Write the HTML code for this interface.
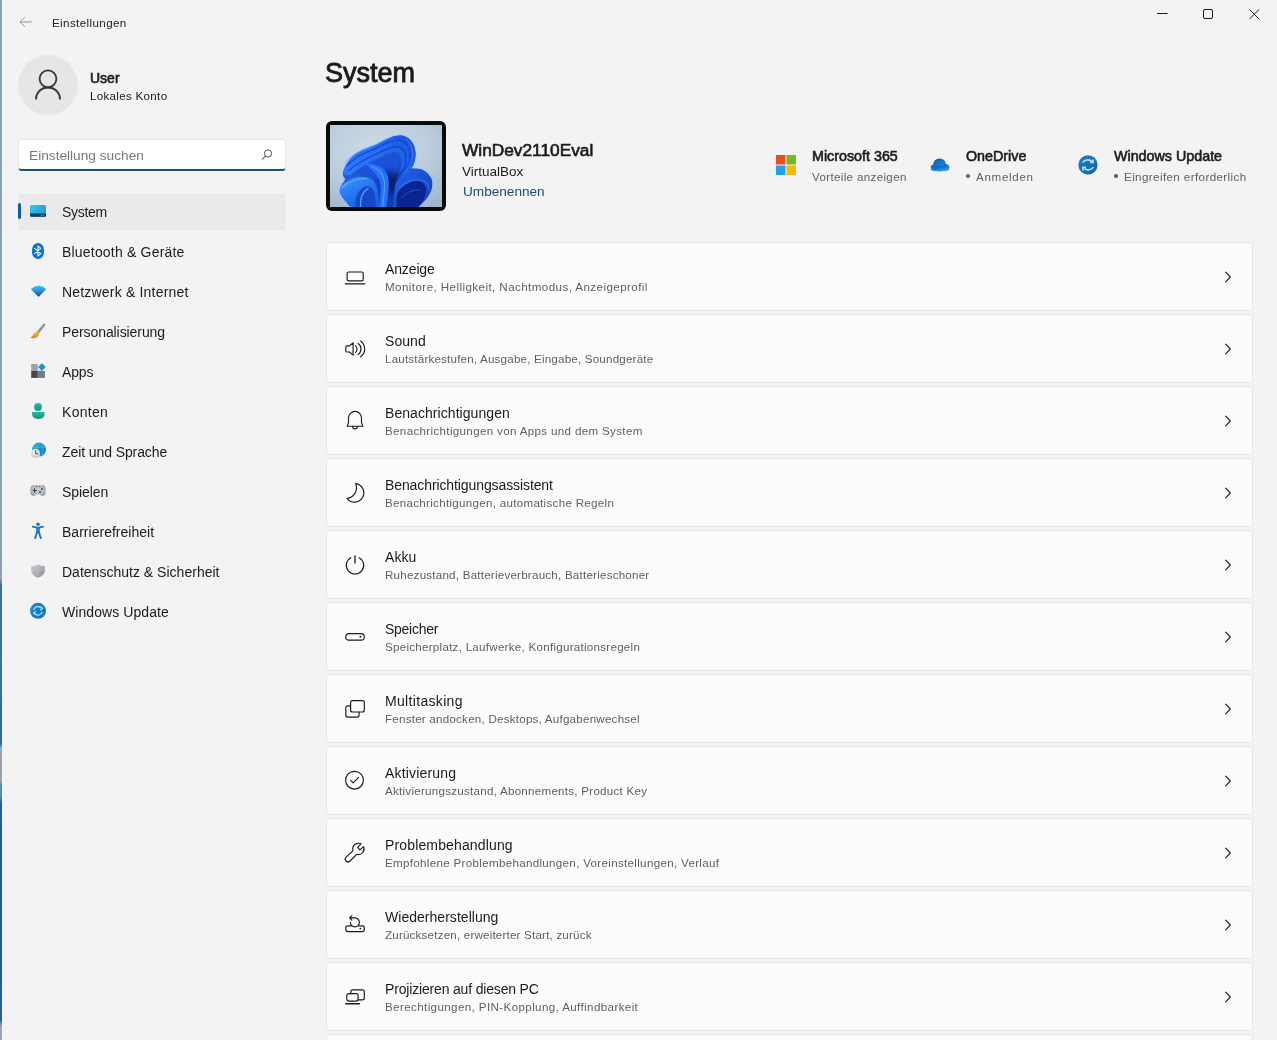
<!DOCTYPE html>
<html><head><meta charset="utf-8">
<style>
*{margin:0;padding:0;box-sizing:border-box}
html,body{width:1277px;height:1040px;overflow:hidden}
body{background:#f3f3f3;font-family:"Liberation Sans",sans-serif;color:#1b1b1b;position:relative}
.a{position:absolute;white-space:nowrap;will-change:transform}
#edge{position:absolute;left:0;top:0;width:2px;height:1040px;background:linear-gradient(#8ba1b0 0,#8e9fab 570px,#9a9cb0 578px,#3a6cae 586px,#3a6cae 645px,#2c7ab0 655px,#2a72ac 700px,#2a6aa8 744px,#80b0d8 748px,#9aa0a8 754px,#9aa0a8 781px,#4a92b2 786px,#4a92b2 796px,#1c5ea8 804px,#1a5ea8 975px,#2a5ea8 1020px,#9aa4b0 1026px)}
#edge2{position:absolute;left:2px;top:0;width:1px;height:1040px;background:#f4f8fb}
.nav{position:absolute;left:18px;width:267px;height:36px;will-change:transform}
.nav .t{position:absolute;left:44px;top:0px;line-height:36px;font-size:14px;color:#1b1b1b}
.nav .ic{position:absolute;left:12px;top:10px;width:16px;height:16px}
.card{will-change:transform;position:absolute;left:326px;width:927px;height:69px;background:#fbfbfb;border:1px solid #e5e5e5;border-radius:3px}
.card .ti{position:absolute;left:58px;top:18px;font-size:14px;color:#1b1b1b;line-height:17px}
.card .su{position:absolute;left:58px;top:36px;font-size:11.6px;color:#5f5f5f;line-height:15px}
.card .ic{position:absolute;left:9px;top:15px;width:40px;height:40px}
.card .ch{position:absolute;left:897px;top:28px;width:8px;height:12px}
</style></head><body>
<div id="edge"></div><div id="edge2"></div>
<!-- title bar -->
<svg class="a" style="left:18px;top:15px" width="14" height="14" viewBox="0 0 14 14"><path d="M2 7H14M6.9 2.1L2 7L6.9 11.9" fill="none" stroke="#9c9c9c" stroke-width="1"/></svg>
<div class="a" style="left:52px;top:15.4px;font-size:11.6px;line-height:15px;letter-spacing:0.39px">Einstellungen</div>
<svg class="a" style="left:1152px;top:8px" width="112" height="16" viewBox="0 0 112 16">
<path d="M5 5.5H15.5" stroke="#1b1b1b" stroke-width="1" fill="none"/>
<rect x="51.5" y="1.5" width="9" height="9" rx="1.5" stroke="#1b1b1b" stroke-width="1" fill="none"/>
<path d="M97.5 1.5L107 11M107 1.5L97.5 11" stroke="#1b1b1b" stroke-width="1" fill="none"/>
</svg>
<!-- user -->
<div class="a" style="left:18px;top:55px;width:60px;height:60px;border-radius:50%;background:#e6e6e6"></div>
<svg class="a" style="left:33px;top:68px" width="30" height="34" viewBox="0 0 30 34"><circle cx="15" cy="10.8" r="8.4" fill="none" stroke="#3a3a3a" stroke-width="1.9"/><path d="M3 31.5C3 24 8.5 19.5 15 19.5S27 24 27 31.5" fill="none" stroke="#3a3a3a" stroke-width="2"/></svg>
<div class="a" style="left:90px;top:70px;font-size:14px;line-height:16px;-webkit-text-stroke:0.6px #1b1b1b">User</div>
<div class="a" style="left:90px;top:88.3px;font-size:11.6px;line-height:15px;letter-spacing:0.3px">Lokales Konto</div>
<!-- search -->
<div class="a" style="left:18px;top:139px;width:268px;height:32px;background:#fff;border:1px solid #e5e5e5;border-bottom:2px solid #1d5278;border-radius:4px"></div>
<div class="a" style="left:29px;top:148px;font-size:13.7px;line-height:16px;color:#787878">Einstellung suchen</div>
<svg class="a" style="left:259px;top:147px" width="16" height="16" viewBox="0 0 16 16"><circle cx="9" cy="6.5" r="3.6" fill="none" stroke="#4a4a4a" stroke-width="1"/><path d="M6.5 9L3.3 12.5" stroke="#4a4a4a" stroke-width="1.1"/></svg>

<!-- nav -->
<div class="nav" style="top:194px;width:268px;background:#eaeaea;border-radius:4px"><div style="position:absolute;left:0;top:9px;width:3px;height:16px;background:#0f5ba6;border-radius:2px"></div></div>
<!-- navicons -->
<svg class="a" style="left:24px;top:195px" width="26" height="430" viewBox="24 195 26 430">
<defs>
<linearGradient id="sysg" x1="0" y1="0" x2="1" y2="0.4"><stop offset="0" stop-color="#36c6dc"/><stop offset="1" stop-color="#1ea0e4"/></linearGradient>
<linearGradient id="wifig" x1="0" y1="0" x2="0" y2="1"><stop offset="0" stop-color="#38c0f2"/><stop offset="0.45" stop-color="#2a96dc"/><stop offset="1" stop-color="#0a3e8e"/></linearGradient>
<linearGradient id="handg" x1="0" y1="0" x2="1" y2="1"><stop offset="0" stop-color="#6a7278"/><stop offset="1" stop-color="#a8b0b6"/></linearGradient>
<linearGradient id="tipg" x1="0" y1="0" x2="0" y2="1"><stop offset="0" stop-color="#f8c040"/><stop offset="1" stop-color="#e07a28"/></linearGradient>
<linearGradient id="kontg" x1="0" y1="0" x2="0" y2="1"><stop offset="0" stop-color="#22c0a0"/><stop offset="1" stop-color="#11907a"/></linearGradient>
<linearGradient id="globg" x1="0" y1="0" x2="1" y2="1"><stop offset="0" stop-color="#28b4d8"/><stop offset="1" stop-color="#1070c0"/></linearGradient>
<radialGradient id="clockg" cx="0.4" cy="0.35" r="0.7"><stop offset="0" stop-color="#f4f4f4"/><stop offset="1" stop-color="#c4c4c4"/></radialGradient>
<radialGradient id="padg" cx="0.5" cy="0.45" r="0.6"><stop offset="0" stop-color="#c6d0da"/><stop offset="0.75" stop-color="#b0b8c2"/><stop offset="1" stop-color="#80868e"/></radialGradient>
<linearGradient id="shg" x1="0" y1="0" x2="1" y2="1"><stop offset="0" stop-color="#cfd3d8"/><stop offset="1" stop-color="#8a8e94"/></linearGradient>
<linearGradient id="wug" x1="0" y1="0" x2="1" y2="1"><stop offset="0" stop-color="#1a8cd8"/><stop offset="1" stop-color="#1370b8"/></linearGradient>
</defs>
<!-- system -->
<rect x="30" y="205" width="16" height="11.8" rx="1.6" fill="url(#sysg)"/>
<path d="M30 213.6H46V214.6A1.6 1.6 0 0 1 44.4 216.8H31.6A1.6 1.6 0 0 1 30 215.2Z" fill="#0b3b5e"/>
<circle cx="41.6" cy="215.2" r="0.55" fill="#9fd6ee"/><circle cx="43.6" cy="215.2" r="0.55" fill="#9fd6ee"/>
<!-- bluetooth -->
<rect x="32" y="243" width="12" height="16" rx="6" ry="7" fill="#0d6fd4"/>
<path d="M34.6 248.4L40.8 253.6L37.9 256V246L40.8 248.4L34.6 253.6" fill="none" stroke="#dff2ff" stroke-width="1.15" stroke-linejoin="round" stroke-linecap="round"/>
<!-- wifi -->
<path d="M38.6 296.6L31.2 289.2Q38.6 282.6 46 289.2Z" fill="url(#wifig)" stroke="url(#wifig)" stroke-width="0.6" stroke-linejoin="round"/>
<!-- brush -->
<path d="M44.6 323.6Q45.8 324.6 45 325.6L39.2 333.2L37 331.4L43.4 324Q44 323.2 44.6 323.6Z" fill="url(#handg)"/>
<path d="M37 331.4L39.2 333.2Q39 336.4 35.6 337.8Q32.8 338.8 30.4 338Q32.4 336.6 33.6 334.2Q34.8 331.6 37 331.4Z" fill="url(#tipg)"/>
<!-- apps -->
<rect x="31.2" y="364" width="6.6" height="6.8" fill="#9ca3aa"/>
<rect x="31.2" y="370.8" width="6.6" height="7.1" fill="#43474b"/>
<rect x="37.8" y="370.8" width="7.1" height="7.1" fill="#737b83"/>
<path d="M41.9 363.3L45.7 367.1L41.9 370.9L38.1 367.1Z" fill="#1f8cd4"/>
<!-- konten -->
<circle cx="38" cy="406.9" r="3.9" fill="url(#kontg)"/>
<path d="M31.9 412H44.7V413Q44.7 418.9 38.3 418.9Q31.9 418.9 31.9 413Z" fill="url(#kontg)"/>
<!-- zeit -->
<circle cx="39" cy="449.6" r="7" fill="url(#globg)"/><ellipse cx="40" cy="449.6" rx="3" ry="6.8" fill="none" stroke="#5ccaf0" stroke-width="0.8" opacity="0.6"/><path d="M32.4 447.2H45.8" stroke="#5ccaf0" stroke-width="0.8" opacity="0.6"/>
<circle cx="35.4" cy="453.6" r="4.8" fill="#f3f3f3" opacity="0.7"/>
<circle cx="35.4" cy="453.6" r="4.5" fill="url(#clockg)"/>
<path d="M35.6 450.4V453.6H38" fill="none" stroke="#3a3a3a" stroke-width="0.9"/>
<!-- spielen -->
<path d="M33.5 485.2H42.5Q45.8 485.2 45.8 490.2Q45.8 495.8 42.5 495.8Q40.5 495.8 39.6 494.6H36.4Q35.5 495.8 33.5 495.8Q30.2 495.8 30.2 490.2Q30.2 485.2 33.5 485.2Z" fill="url(#padg)"/>
<path d="M32.8 490.5H36.8M34.5 488.3V492.6" stroke="#2f3438" stroke-width="1"/>
<circle cx="36.5" cy="486.5" r="0.6" fill="#3a3f44"/><circle cx="39.5" cy="486.5" r="0.6" fill="#3a3f44"/>
<circle cx="42" cy="489" r="0.95" fill="#3e4850"/><circle cx="40" cy="492" r="0.95" fill="#3e4850"/>
<!-- barriere -->
<circle cx="38" cy="524.3" r="1.75" fill="#1a6fb8"/>
<path d="M32.8 526.6L37 527.6H39L43.1 526.6" fill="none" stroke="#1a72c0" stroke-width="1.9" stroke-linecap="round" stroke-linejoin="round"/>
<path d="M38 527.8V533" stroke="#1a80d6" stroke-width="3.6"/>
<path d="M37 532.5L35.2 538M39 532.5L40.8 538" fill="none" stroke="#1a6fb8" stroke-width="1.9" stroke-linecap="round"/>
<!-- shield -->
<path d="M38 564.3Q41.5 566.6 44.8 566V571Q44.8 575.4 38 577.7Q31.2 575.4 31.2 571V566Q34.5 566.6 38 564.3Z" fill="url(#shg)"/>
<path d="M38 564.8V577.2" stroke="#d8dce0" stroke-width="0.5" opacity="0.6"/>
<!-- windows update -->
<circle cx="38" cy="610.8" r="8" fill="url(#wug)"/>
<path d="M33.6 609.8A4.5 4.5 0 0 1 41.6 608.4M42.4 611.8A4.5 4.5 0 0 1 34.4 613.2" fill="none" stroke="#a8e4ff" stroke-width="1.3"/>
<path d="M40.2 606.8L42.6 608.6L40.2 610.2M35.8 611.4L33.4 613L35.8 614.8" fill="none" stroke="#a8e4ff" stroke-width="1.2" stroke-linejoin="round"/>
</svg>
<div class="nav" style="top:194px"><div class="t" style="letter-spacing:-0.300px">System</div></div>
<div class="nav" style="top:234px"><div class="t" style="letter-spacing:0.194px">Bluetooth &amp; Geräte</div></div>
<div class="nav" style="top:274px"><div class="t" style="letter-spacing:0.189px">Netzwerk &amp; Internet</div></div>
<div class="nav" style="top:314px"><div class="t" style="letter-spacing:-0.080px">Personalisierung</div></div>
<div class="nav" style="top:354px"><div class="t" style="letter-spacing:-0.133px">Apps</div></div>
<div class="nav" style="top:394px"><div class="t" style="letter-spacing:0.300px">Konten</div></div>
<div class="nav" style="top:434px"><div class="t" style="letter-spacing:-0.093px">Zeit und Sprache</div></div>
<div class="nav" style="top:474px"><div class="t" style="letter-spacing:-0.067px">Spielen</div></div>
<div class="nav" style="top:514px"><div class="t" style="letter-spacing:0.020px">Barrierefreiheit</div></div>
<div class="nav" style="top:554px"><div class="t" style="letter-spacing:0.013px">Datenschutz &amp; Sicherheit</div></div>
<div class="nav" style="top:594px"><div class="t" style="letter-spacing:0.077px">Windows Update</div></div>

<!-- header -->
<div class="a sb" style="left:325px;top:57.3px;font-size:27px;line-height:32px;-webkit-text-stroke:0.85px #1b1b1b">System</div>
<div class="a" style="left:326px;top:121px;width:120px;height:90px;background:#0a0a0a;border-radius:6px"></div>
<svg class="a" style="left:330px;top:125px" width="112" height="82" viewBox="0 0 1277 935">
<defs>
<radialGradient id="bg" cx="0.42" cy="0.3" r="0.85"><stop offset="0" stop-color="#cfdbe7"/><stop offset="0.55" stop-color="#bccddd"/><stop offset="1" stop-color="#9fb6cd"/></radialGradient>
<linearGradient id="sil" x1="0" y1="0" x2="1" y2="1"><stop offset="0" stop-color="#2a6ef6"/><stop offset="1" stop-color="#0d2f9e"/></linearGradient>
<linearGradient id="rib" x1="0" y1="0.5" x2="1" y2="0"><stop offset="0" stop-color="#2c78ff"/><stop offset="0.6" stop-color="#2166f2"/><stop offset="1" stop-color="#1a4fd0"/></linearGradient>
<linearGradient id="lp" x1="0" y1="0" x2="0.6" y2="1"><stop offset="0" stop-color="#3a96ff"/><stop offset="1" stop-color="#1a5fe6"/></linearGradient>
<linearGradient id="rl" x1="0" y1="0" x2="1" y2="1"><stop offset="0" stop-color="#2264ee"/><stop offset="1" stop-color="#1040b8"/></linearGradient>
<filter id="gl" x="-20%" y="-20%" width="140%" height="140%"><feGaussianBlur stdDeviation="18"/></filter>
<filter id="sb" x="-20%" y="-20%" width="140%" height="140%"><feGaussianBlur stdDeviation="9"/></filter>
<filter id="bl" x="-50%" y="-50%" width="200%" height="200%"><feGaussianBlur stdDeviation="40"/></filter>
</defs>
<rect width="1277" height="935" fill="url(#bg)"/>
<path id="silp" d="M235 935C170 860 105 790 112 740C118 690 160 650 175 620C150 590 140 560 150 540C165 470 215 390 290 330C380 270 470 250 560 205C660 150 740 110 830 122C920 140 975 230 975 330C975 410 950 460 925 500C1010 480 1100 520 1150 600C1180 660 1170 740 1120 810C1080 870 1030 910 1010 935Z" fill="#7ab8ff" opacity="0.75" filter="url(#gl)"/>
<path d="M235 935C170 860 105 790 112 740C118 690 160 650 175 620C150 590 140 560 150 540C165 470 215 390 290 330C380 270 470 250 560 205C660 150 740 110 830 122C920 140 975 230 975 330C975 410 950 460 925 500C1010 480 1100 520 1150 600C1180 660 1170 740 1120 810C1080 870 1030 910 1010 935Z" fill="url(#sil)"/>
<!-- top ribbon -->
<path d="M150 540C165 470 215 390 290 330C380 270 470 250 560 205C660 150 740 110 830 122C920 140 975 230 975 330C975 410 950 460 925 500C880 560 800 600 720 630C790 560 830 470 810 380C790 300 720 290 640 330C520 390 380 450 230 570C190 580 160 570 150 540Z" fill="url(#rib)"/>
<path d="M190 470C260 390 360 330 470 290C580 250 680 160 800 175C880 190 920 270 915 350C910 430 870 500 800 560" fill="none" stroke="#1446c8" stroke-width="16" opacity="0.85" filter="url(#sb)"/>
<path d="M215 520C300 440 400 390 500 345C600 300 690 235 780 250C850 265 870 330 865 400C860 470 820 540 760 590" fill="none" stroke="#123cb4" stroke-width="14" opacity="0.8" filter="url(#sb)"/>
<path d="M175 420C240 350 330 300 420 270C520 235 600 180 700 140" fill="none" stroke="#5aa8ff" stroke-width="10" opacity="0.8" filter="url(#sb)"/>
<path d="M860 150C930 210 950 300 940 380" fill="none" stroke="#4a90ff" stroke-width="10" opacity="0.7" filter="url(#sb)"/>
<!-- inner hollow -->
<path d="M330 520C420 450 530 400 630 360C710 330 770 350 780 420C790 500 760 560 700 610C620 600 520 590 430 570C380 560 350 545 330 520Z" fill="#1a52dc"/>
<!-- dark center -->
<ellipse cx="700" cy="660" rx="110" ry="130" fill="#081a70" filter="url(#bl)"/>
<!-- middle S stripe -->
<path d="M400 440C500 430 600 470 650 560C690 640 670 760 640 935H560C580 800 590 700 560 620C530 560 470 500 400 440Z" fill="#2a74ff" opacity="0.95"/>
<path d="M470 470C560 500 610 560 620 640C630 720 610 820 600 935" fill="none" stroke="#6ab4ff" stroke-width="12" opacity="0.7" filter="url(#sb)"/>
<!-- right lobe -->
<path d="M760 640C820 560 920 500 1010 500C1100 510 1160 590 1160 680C1160 760 1110 830 1060 880C1035 905 1020 925 1010 935H720C740 860 720 720 760 640Z" fill="url(#rl)"/>
<path d="M780 760C840 680 930 630 1010 640C1080 650 1110 720 1090 790C1070 850 1040 900 1000 935H760C760 860 750 810 780 760Z" fill="#0b2590"/>
<path d="M790 720C850 650 950 610 1040 630C1100 645 1130 690 1130 740" fill="none" stroke="#3a7cff" stroke-width="12" opacity="0.8" filter="url(#sb)"/>
<path d="M820 830C880 760 960 730 1030 745" fill="none" stroke="#2a5ee0" stroke-width="10" opacity="0.8" filter="url(#sb)"/>
<!-- left petal -->
<path d="M112 740C118 690 160 650 250 610C330 580 430 580 490 630C540 690 560 800 560 935H235C170 860 105 790 112 740Z" fill="url(#lp)"/>
<path d="M290 935C280 830 320 730 410 700C470 690 500 740 510 800C520 850 520 900 520 935Z" fill="#1648c8" filter="url(#sb)"/>
<path d="M350 935C340 840 370 760 440 720" fill="none" stroke="#6ab8ff" stroke-width="14" opacity="0.8" filter="url(#sb)"/>
<path d="M130 720C200 650 300 610 420 610" fill="none" stroke="#7cc0ff" stroke-width="12" opacity="0.75" filter="url(#sb)"/>
</svg>
<div class="a" style="left:462px;top:139.8px;font-size:17.3px;line-height:20px;-webkit-text-stroke:0.65px #1b1b1b">WinDev2110Eval</div>
<div class="a" style="left:462px;top:164px;font-size:13.5px;line-height:16px;color:#1b1b1b">VirtualBox</div>
<div class="a" style="left:463px;top:184px;font-size:13.6px;line-height:16px;color:#234a7a">Umbenennen</div>

<!-- right items -->
<svg class="a" style="left:776px;top:155px" width="20" height="20" viewBox="0 0 20 20"><rect x="0" y="0" width="9.5" height="9.5" fill="#e8501f"/><rect x="10.5" y="0" width="9.5" height="9.5" fill="#7cb51f"/><rect x="0" y="10.5" width="9.5" height="9.5" fill="#1fa3ea"/><rect x="10.5" y="10.5" width="9.5" height="9.5" fill="#fbb60a"/></svg>
<div class="a" style="left:812px;top:148px;font-size:14.3px;line-height:16px;-webkit-text-stroke:0.6px #1b1b1b">Microsoft 365</div>
<div class="a" style="left:812px;top:169.2px;font-size:11.6px;line-height:15px;letter-spacing:0.34px;color:#5f5f5f">Vorteile anzeigen</div>
<svg class="a" style="left:929px;top:156px" width="22" height="16" viewBox="0 0 22 16"><defs><linearGradient id="cg" x1="0.2" y1="0" x2="0.8" y2="1"><stop offset="0" stop-color="#0b5cb6"/><stop offset="0.55" stop-color="#1a7fd6"/><stop offset="1" stop-color="#2ba6ee"/></linearGradient></defs><g fill="url(#cg)"><circle cx="10.6" cy="9" r="6.6"/><circle cx="17" cy="11.6" r="3.3"/><circle cx="5" cy="11.7" r="3.3"/><rect x="5" y="10" width="12" height="5"/></g></svg>
<div class="a" style="left:966px;top:148px;font-size:14.3px;line-height:16px;-webkit-text-stroke:0.6px #1b1b1b">OneDrive</div>
<div class="a" style="left:966.3px;top:173.9px;width:3.6px;height:3.6px;border-radius:50%;background:#4a6888"></div><div class="a" style="left:976px;top:169.2px;font-size:11.6px;line-height:15px;letter-spacing:0.69px;color:#5f5f5f">Anmelden</div>
<svg class="a" style="left:1078px;top:155px" width="20" height="20" viewBox="0 0 20 20"><defs><linearGradient id="wuh" x1="0" y1="0" x2="1" y2="1"><stop offset="0" stop-color="#1c7fcc"/><stop offset="1" stop-color="#0f62ae"/></linearGradient></defs><circle cx="10" cy="9.9" r="9.6" fill="url(#wuh)"/><path d="M4.6 7.6A5.6 4.6 0 0 1 13.6 6.2M15.4 12A5.6 4.6 0 0 1 6.4 13.6" fill="none" stroke="#b4e6ff" stroke-width="1.6"/><path d="M15 4.4V7.4H12M5 15.4V12.4H8" fill="none" stroke="#b4e6ff" stroke-width="1.6" stroke-linejoin="miter"/></svg>
<div class="a" style="left:1114px;top:148px;font-size:14.3px;line-height:16px;-webkit-text-stroke:0.6px #1b1b1b">Windows Update</div>
<div class="a" style="left:1113.8px;top:174.3px;width:3.6px;height:3.6px;border-radius:50%;background:#4a6888"></div><div class="a" style="left:1124px;top:169.4px;font-size:11.6px;line-height:15px;letter-spacing:0.4px;color:#5f5f5f">Eingreifen erforderlich</div>

<!-- CARDS -->
<div class="card" style="top:242px"><svg class="ic" width="40" height="40" viewBox="0 0 40 40"><rect x="11.1" y="14" width="16.1" height="8.9" rx="1.6" fill="none" stroke="#1b1b1b" stroke-width="1.15" stroke-linecap="round" stroke-linejoin="round"/><path d="M9.2 25.8H28.8" fill="none" stroke="#1b1b1b" stroke-width="1.2" stroke-linecap="round" stroke-linejoin="round"/></svg><div class="ti" style="letter-spacing:-0.133px">Anzeige</div><div class="su" style="letter-spacing:0.424px">Monitore, Helligkeit, Nachtmodus, Anzeigeprofil</div><svg class="ch" width="8" height="12" viewBox="0 0 8 12"><path d="M1.6 1.2L6.4 6L1.6 10.8" fill="none" stroke="#1b1b1b" stroke-width="1.15" stroke-linecap="round" stroke-linejoin="round"/></svg></div>
<div class="card" style="top:314px"><svg class="ic" width="40" height="40" viewBox="0 0 40 40"><path d="M17.1 12.8L13.5 15.9H10.9Q9.8 15.9 9.8 17V20.9Q9.8 22 10.9 22H13.5L17.1 25.1Z" fill="none" stroke="#1b1b1b" stroke-width="1.15" stroke-linecap="round" stroke-linejoin="round"/><path d="M19.6 15.6A4.8 4.8 0 0 1 19.6 22.4M22.1 13.6A6.5 6.5 0 0 1 22.1 24.4M24.6 11A9.7 9.7 0 0 1 24.6 26.8" fill="none" stroke="#1b1b1b" stroke-width="1.15" stroke-linecap="round" stroke-linejoin="round"/></svg><div class="ti" style="letter-spacing:0.050px">Sound</div><div class="su" style="letter-spacing:0.196px">Lautstärkestufen, Ausgabe, Eingabe, Soundgeräte</div><svg class="ch" width="8" height="12" viewBox="0 0 8 12"><path d="M1.6 1.2L6.4 6L1.6 10.8" fill="none" stroke="#1b1b1b" stroke-width="1.15" stroke-linecap="round" stroke-linejoin="round"/></svg></div>
<div class="card" style="top:386px"><svg class="ic" width="40" height="40" viewBox="0 0 40 40"><path d="M11.2 24.2L12.5 20.6V16A6.5 6.6 0 0 1 25.5 16V20.6L26.9 24.2Z" fill="none" stroke="#1b1b1b" stroke-width="1.15" stroke-linecap="round" stroke-linejoin="round"/><path d="M16.6 24.4A2.45 2.45 0 0 0 21.5 24.4" fill="none" stroke="#1b1b1b" stroke-width="1.15" stroke-linecap="round" stroke-linejoin="round"/></svg><div class="ti" style="letter-spacing:0.059px">Benachrichtigungen</div><div class="su" style="letter-spacing:0.334px">Benachrichtigungen von Apps und dem System</div><svg class="ch" width="8" height="12" viewBox="0 0 8 12"><path d="M1.6 1.2L6.4 6L1.6 10.8" fill="none" stroke="#1b1b1b" stroke-width="1.15" stroke-linecap="round" stroke-linejoin="round"/></svg></div>
<div class="card" style="top:458px"><svg class="ic" width="40" height="40" viewBox="0 0 40 40"><path d="M19.6 9.6A9.3 9.3 0 1 1 11 24.3A10.5 10.5 0 0 0 19.6 9.6Z" fill="none" stroke="#1b1b1b" stroke-width="1.15" stroke-linecap="round" stroke-linejoin="round"/></svg><div class="ti" style="letter-spacing:-0.100px">Benachrichtigungsassistent</div><div class="su" style="letter-spacing:0.289px">Benachrichtigungen, automatische Regeln</div><svg class="ch" width="8" height="12" viewBox="0 0 8 12"><path d="M1.6 1.2L6.4 6L1.6 10.8" fill="none" stroke="#1b1b1b" stroke-width="1.15" stroke-linecap="round" stroke-linejoin="round"/></svg></div>
<div class="card" style="top:530px"><svg class="ic" width="40" height="40" viewBox="0 0 40 40"><path d="M14.8 11.7A8.7 8.7 0 1 0 23.2 11.7" fill="none" stroke="#1b1b1b" stroke-width="1.15" stroke-linecap="round" stroke-linejoin="round"/><path d="M19 9.8V16.9" fill="none" stroke="#1b1b1b" stroke-width="1.3" stroke-linecap="round" stroke-linejoin="round"/></svg><div class="ti" style="letter-spacing:0.067px">Akku</div><div class="su" style="letter-spacing:0.224px">Ruhezustand, Batterieverbrauch, Batterieschoner</div><svg class="ch" width="8" height="12" viewBox="0 0 8 12"><path d="M1.6 1.2L6.4 6L1.6 10.8" fill="none" stroke="#1b1b1b" stroke-width="1.15" stroke-linecap="round" stroke-linejoin="round"/></svg></div>
<div class="card" style="top:602px"><svg class="ic" width="40" height="40" viewBox="0 0 40 40"><rect x="9.8" y="15.6" width="18.5" height="6.5" rx="3.2" fill="none" stroke="#1b1b1b" stroke-width="1.15" stroke-linecap="round" stroke-linejoin="round"/><circle cx="24.4" cy="18.8" r="0.95" fill="#1b1b1b"/></svg><div class="ti" style="letter-spacing:-0.271px">Speicher</div><div class="su" style="letter-spacing:0.264px">Speicherplatz, Laufwerke, Konfigurationsregeln</div><svg class="ch" width="8" height="12" viewBox="0 0 8 12"><path d="M1.6 1.2L6.4 6L1.6 10.8" fill="none" stroke="#1b1b1b" stroke-width="1.15" stroke-linecap="round" stroke-linejoin="round"/></svg></div>
<div class="card" style="top:674px"><svg class="ic" width="40" height="40" viewBox="0 0 40 40"><rect x="14.6" y="10.6" width="13.7" height="11.4" rx="2" fill="none" stroke="#1b1b1b" stroke-width="1.15" stroke-linecap="round" stroke-linejoin="round"/><path d="M14.6 15.8H11.8Q9.8 15.8 9.8 17.8V25.1Q9.8 27.1 11.8 27.1H21.1Q23.1 27.1 23.1 25.1V22" fill="none" stroke="#1b1b1b" stroke-width="1.15" stroke-linecap="round" stroke-linejoin="round"/></svg><div class="ti" style="letter-spacing:0.327px">Multitasking</div><div class="su" style="letter-spacing:0.231px">Fenster andocken, Desktops, Aufgabenwechsel</div><svg class="ch" width="8" height="12" viewBox="0 0 8 12"><path d="M1.6 1.2L6.4 6L1.6 10.8" fill="none" stroke="#1b1b1b" stroke-width="1.15" stroke-linecap="round" stroke-linejoin="round"/></svg></div>
<div class="card" style="top:746px"><svg class="ic" width="40" height="40" viewBox="0 0 40 40"><circle cx="18.5" cy="18.2" r="8.9" fill="none" stroke="#1b1b1b" stroke-width="1.15" stroke-linecap="round" stroke-linejoin="round"/><path d="M14.6 18.4L17.2 20.8L22.6 15.3" fill="none" stroke="#1b1b1b" stroke-width="1.15" stroke-linecap="round" stroke-linejoin="round"/></svg><div class="ti" style="letter-spacing:0.170px">Aktivierung</div><div class="su" style="letter-spacing:0.257px">Aktivierungszustand, Abonnements, Product Key</div><svg class="ch" width="8" height="12" viewBox="0 0 8 12"><path d="M1.6 1.2L6.4 6L1.6 10.8" fill="none" stroke="#1b1b1b" stroke-width="1.15" stroke-linecap="round" stroke-linejoin="round"/></svg></div>
<div class="card" style="top:818px"><svg class="ic" width="40" height="40" viewBox="0 0 40 40"><path d="M16.8 16.8C16.2 13.5 17.5 10.8 20.5 9.6C22 9 23.5 9.1 25 9.8L21.6 13.3L23.9 15.9L27.6 12.6C28.4 14.5 28.1 16.8 26.8 18.5C25.2 20.4 22.8 21 20.7 20.3L14 27C12.9 28.1 11.2 28.1 10.1 27C9 25.9 9 24.2 10.1 23.1Z" fill="none" stroke="#1b1b1b" stroke-width="1.15" stroke-linecap="round" stroke-linejoin="round"/></svg><div class="ti" style="letter-spacing:0.144px">Problembehandlung</div><div class="su" style="letter-spacing:0.312px">Empfohlene Problembehandlungen, Voreinstellungen, Verlauf</div><svg class="ch" width="8" height="12" viewBox="0 0 8 12"><path d="M1.6 1.2L6.4 6L1.6 10.8" fill="none" stroke="#1b1b1b" stroke-width="1.15" stroke-linecap="round" stroke-linejoin="round"/></svg></div>
<div class="card" style="top:890px"><svg class="ic" width="40" height="40" viewBox="0 0 40 40"><path d="M15.3 19.8H11.8Q9.8 19.8 9.8 21.8V23.6Q9.8 25.6 11.8 25.6H26.3Q28.3 25.6 28.3 23.6V21.8Q28.3 19.8 26.3 19.8H22.5" fill="none" stroke="#1b1b1b" stroke-width="1.15" stroke-linecap="round" stroke-linejoin="round"/><path d="M14.4 16.2A4.5 4.5 0 1 0 18.9 11.9H13.8M15.9 9.6L13.6 11.9L15.9 14.2" fill="none" stroke="#1b1b1b" stroke-width="1.15" stroke-linecap="round" stroke-linejoin="round"/><circle cx="24.4" cy="22.6" r="0.95" fill="#1b1b1b"/></svg><div class="ti" style="letter-spacing:0.031px">Wiederherstellung</div><div class="su" style="letter-spacing:0.195px">Zurücksetzen, erweiterter Start, zurück</div><svg class="ch" width="8" height="12" viewBox="0 0 8 12"><path d="M1.6 1.2L6.4 6L1.6 10.8" fill="none" stroke="#1b1b1b" stroke-width="1.15" stroke-linecap="round" stroke-linejoin="round"/></svg></div>
<div class="card" style="top:962px"><svg class="ic" width="40" height="40" viewBox="0 0 40 40"><path d="M14.8 15.6V13.8Q14.8 11.8 16.8 11.8H26.3Q28.3 11.8 28.3 13.8V19.8Q28.3 21.8 26.3 21.8H22.1" fill="none" stroke="#1b1b1b" stroke-width="1.15" stroke-linecap="round" stroke-linejoin="round"/><rect x="10.8" y="15.6" width="11.3" height="7.5" rx="2" fill="none" stroke="#1b1b1b" stroke-width="1.15" stroke-linecap="round" stroke-linejoin="round"/><path d="M9.7 25.7H23.4" fill="none" stroke="#1b1b1b" stroke-width="1.4" stroke-linecap="round" stroke-linejoin="round"/></svg><div class="ti" style="letter-spacing:-0.171px">Projizieren auf diesen PC</div><div class="su" style="letter-spacing:0.384px">Berechtigungen, PIN-Kopplung, Auffindbarkeit</div><svg class="ch" width="8" height="12" viewBox="0 0 8 12"><path d="M1.6 1.2L6.4 6L1.6 10.8" fill="none" stroke="#1b1b1b" stroke-width="1.15" stroke-linecap="round" stroke-linejoin="round"/></svg></div>
<div class="card" style="top:1034px"></div>
</body></html>
